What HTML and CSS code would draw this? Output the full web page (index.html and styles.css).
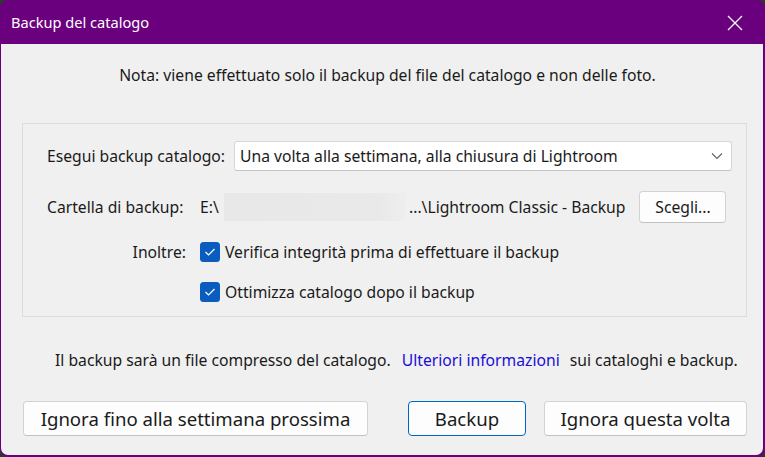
FILE: index.html
```html
<!DOCTYPE html>
<html lang="it">
<head>
<meta charset="utf-8">
<title>Backup del catalogo</title>
<link rel="stylesheet" href="styles.css">
</head>
<body>
<div class="window">
  <div class="titlebar">
    <span class="title">Backup del catalogo</span>
    <svg class="close" width="16" height="16" viewBox="0 0 16 16"><path d="M1 1 L15 15 M15 1 L1 15" stroke="#fff" stroke-width="1.3" fill="none"/></svg>
  </div>
  <div class="content">
    <p class="note">Nota: viene effettuato solo il backup del file del catalogo e non delle foto.</p>
    <div class="group">
      <div class="row row-select">
        <span class="label">Esegui backup catalogo:</span>
        <div class="select">
          <span>Una volta alla settimana, alla chiusura di Lightroom</span>
          <svg class="chev" width="12" height="8" viewBox="0 0 12 8"><path d="M1 1.5 L6 6.5 L11 1.5" stroke="#606060" stroke-width="1.1" fill="none"/></svg>
        </div>
      </div>
      <div class="row row-folder">
        <span class="label fixed">Cartella di backup:</span>
        <span class="path-start">E:\</span>
        <span class="redacted"></span>
        <span class="path-end">...\Lightroom Classic - Backup</span>
        <button class="btn choose">Scegli...</button>
      </div>
      <div class="row row-check">
        <span class="label fixed right">Inoltre:</span>
        <span class="check"><svg width="20" height="20" viewBox="0 0 20 20"><rect x="0" y="0" width="20" height="20" rx="3.5" fill="#0a5cbf"/><path d="M5.5 10 L8.5 13 L14.5 7" stroke="#fff" stroke-width="1.2" fill="none"/></svg></span>
        <span class="check-label">Verifica integrità prima di effettuare il backup</span>
      </div>
      <div class="row row-check">
        <span class="label fixed"></span>
        <span class="check"><svg width="20" height="20" viewBox="0 0 20 20"><rect x="0" y="0" width="20" height="20" rx="3.5" fill="#0a5cbf"/><path d="M5.5 10 L8.5 13 L14.5 7" stroke="#fff" stroke-width="1.2" fill="none"/></svg></span>
        <span class="check-label">Ottimizza catalogo dopo il backup</span>
      </div>
    </div>
    <p class="info">Il backup sarà un file compresso del catalogo. <a class="link" href="#">Ulteriori informazioni</a> sui cataloghi e backup.</p>
    <div class="buttons">
      <button class="btn big skip-week">Ignora fino alla settimana prossima</button>
      <div class="right-buttons">
        <button class="btn big primary">Backup</button>
        <button class="btn big skip-once">Ignora questa volta</button>
      </div>
    </div>
  </div>
</div>
</body>
</html>
```

FILE: styles.css
```css
* { box-sizing: border-box; }
html, body {
  margin: 0;
  padding: 0;
  width: 765px;
  height: 457px;
  background: #2c3a2a;
  overflow: hidden;
}
body {
  font-family: "Noto Sans", "Open Sans", sans-serif;
  font-size: 15.7px;
  color: #1a1a1a;
}
.window {
  width: 765px;
  height: 457px;
  background: #6b007f;
  border-radius: 8px;
  padding: 0 2px 2px 1px;
  display: flex;
  flex-direction: column;
}
.titlebar {
  height: 44px;
  flex: none;
  display: flex;
  align-items: center;
  justify-content: space-between;
  padding: 0 20px 0 10px;
  color: #fff;
}
.title {
  font-size: 14.6px;
}
.close { display: block; margin-top: 1px; }
.content {
  flex: 1;
  background: #f0f0f0;
  border-radius: 0 0 7px 7px;
  padding: 0 16px 0 21px;
  display: flex;
  flex-direction: column;
}
.note {
  margin: 20px 0 0;
  text-align: center;
  line-height: 22px;
  padding-left: 6px;
  white-space: nowrap;
}
.group {
  margin-top: 37px;
  border: 1px solid #dcdcdc;
  height: 194px;
  padding: 17px 14px 0 24px;
  display: flex;
  flex-direction: column;
}
.row {
  display: flex;
  align-items: center;
}
.row-select { height: 30px; }
.row-folder { height: 32px; margin-top: 20px; }
.row-check { height: 22px; margin-top: 18px; }
.row-check + .row-check { margin-top: 18px; }
.label { white-space: nowrap; }
.row-select .label { margin-right: 9px; }
.fixed { width: 153px; flex: none; }
.right { text-align: right; padding-right: 14px; }
.select {
  flex: 1;
  height: 30px;
  background: #fff;
  border: 1px solid #d6d6d6;
  border-bottom-color: #c4c4c4;
  border-radius: 3px;
  display: flex;
  align-items: center;
  justify-content: space-between;
  padding: 0 8px 0 5px;
  white-space: nowrap;
}
.chev { display: block; }
.path-start { width: 24px; flex: none; }
.redacted {
  width: 182px;
  height: 28px;
  flex: none;
  background: linear-gradient(90deg, #e8e8e8 0%, #e9e9e9 85%, #eeeeee 100%);
}
.path-end { margin-left: 3px; white-space: nowrap; }
.btn {
  font-family: inherit;
  font-size: 15.7px;
  color: #1a1a1a;
  background: #fdfdfd;
  border: 1px solid #d3d3d3;
  border-bottom-color: #c2c2c2;
  border-radius: 4px;
  padding: 0;
  white-space: nowrap;
}
.choose {
  width: 87px;
  height: 32px;
  margin-left: 14px;
}
.check { width: 20px; height: 20px; flex: none; margin-right: 5px; }
.check svg { display: block; }
.check-label { white-space: nowrap; }
.info {
  margin: 32px 0 0;
  line-height: 22px;
  padding-left: 33px;
  white-space: nowrap;
}
.link {
  color: #1a0dd6;
  text-decoration: none;
  margin: 0 6px 0 7px;
}
.buttons {
  margin-top: 30px;
  display: flex;
  justify-content: space-between;
  align-items: center;
  padding-left: 1px;
}
.right-buttons { display: flex; gap: 18px; }
.big { height: 35px; font-size: 18.6px; }
.skip-week { width: 345px; }
.primary { width: 118px; border: 1px solid #0067c0; }
.skip-once { width: 203px; }
```
